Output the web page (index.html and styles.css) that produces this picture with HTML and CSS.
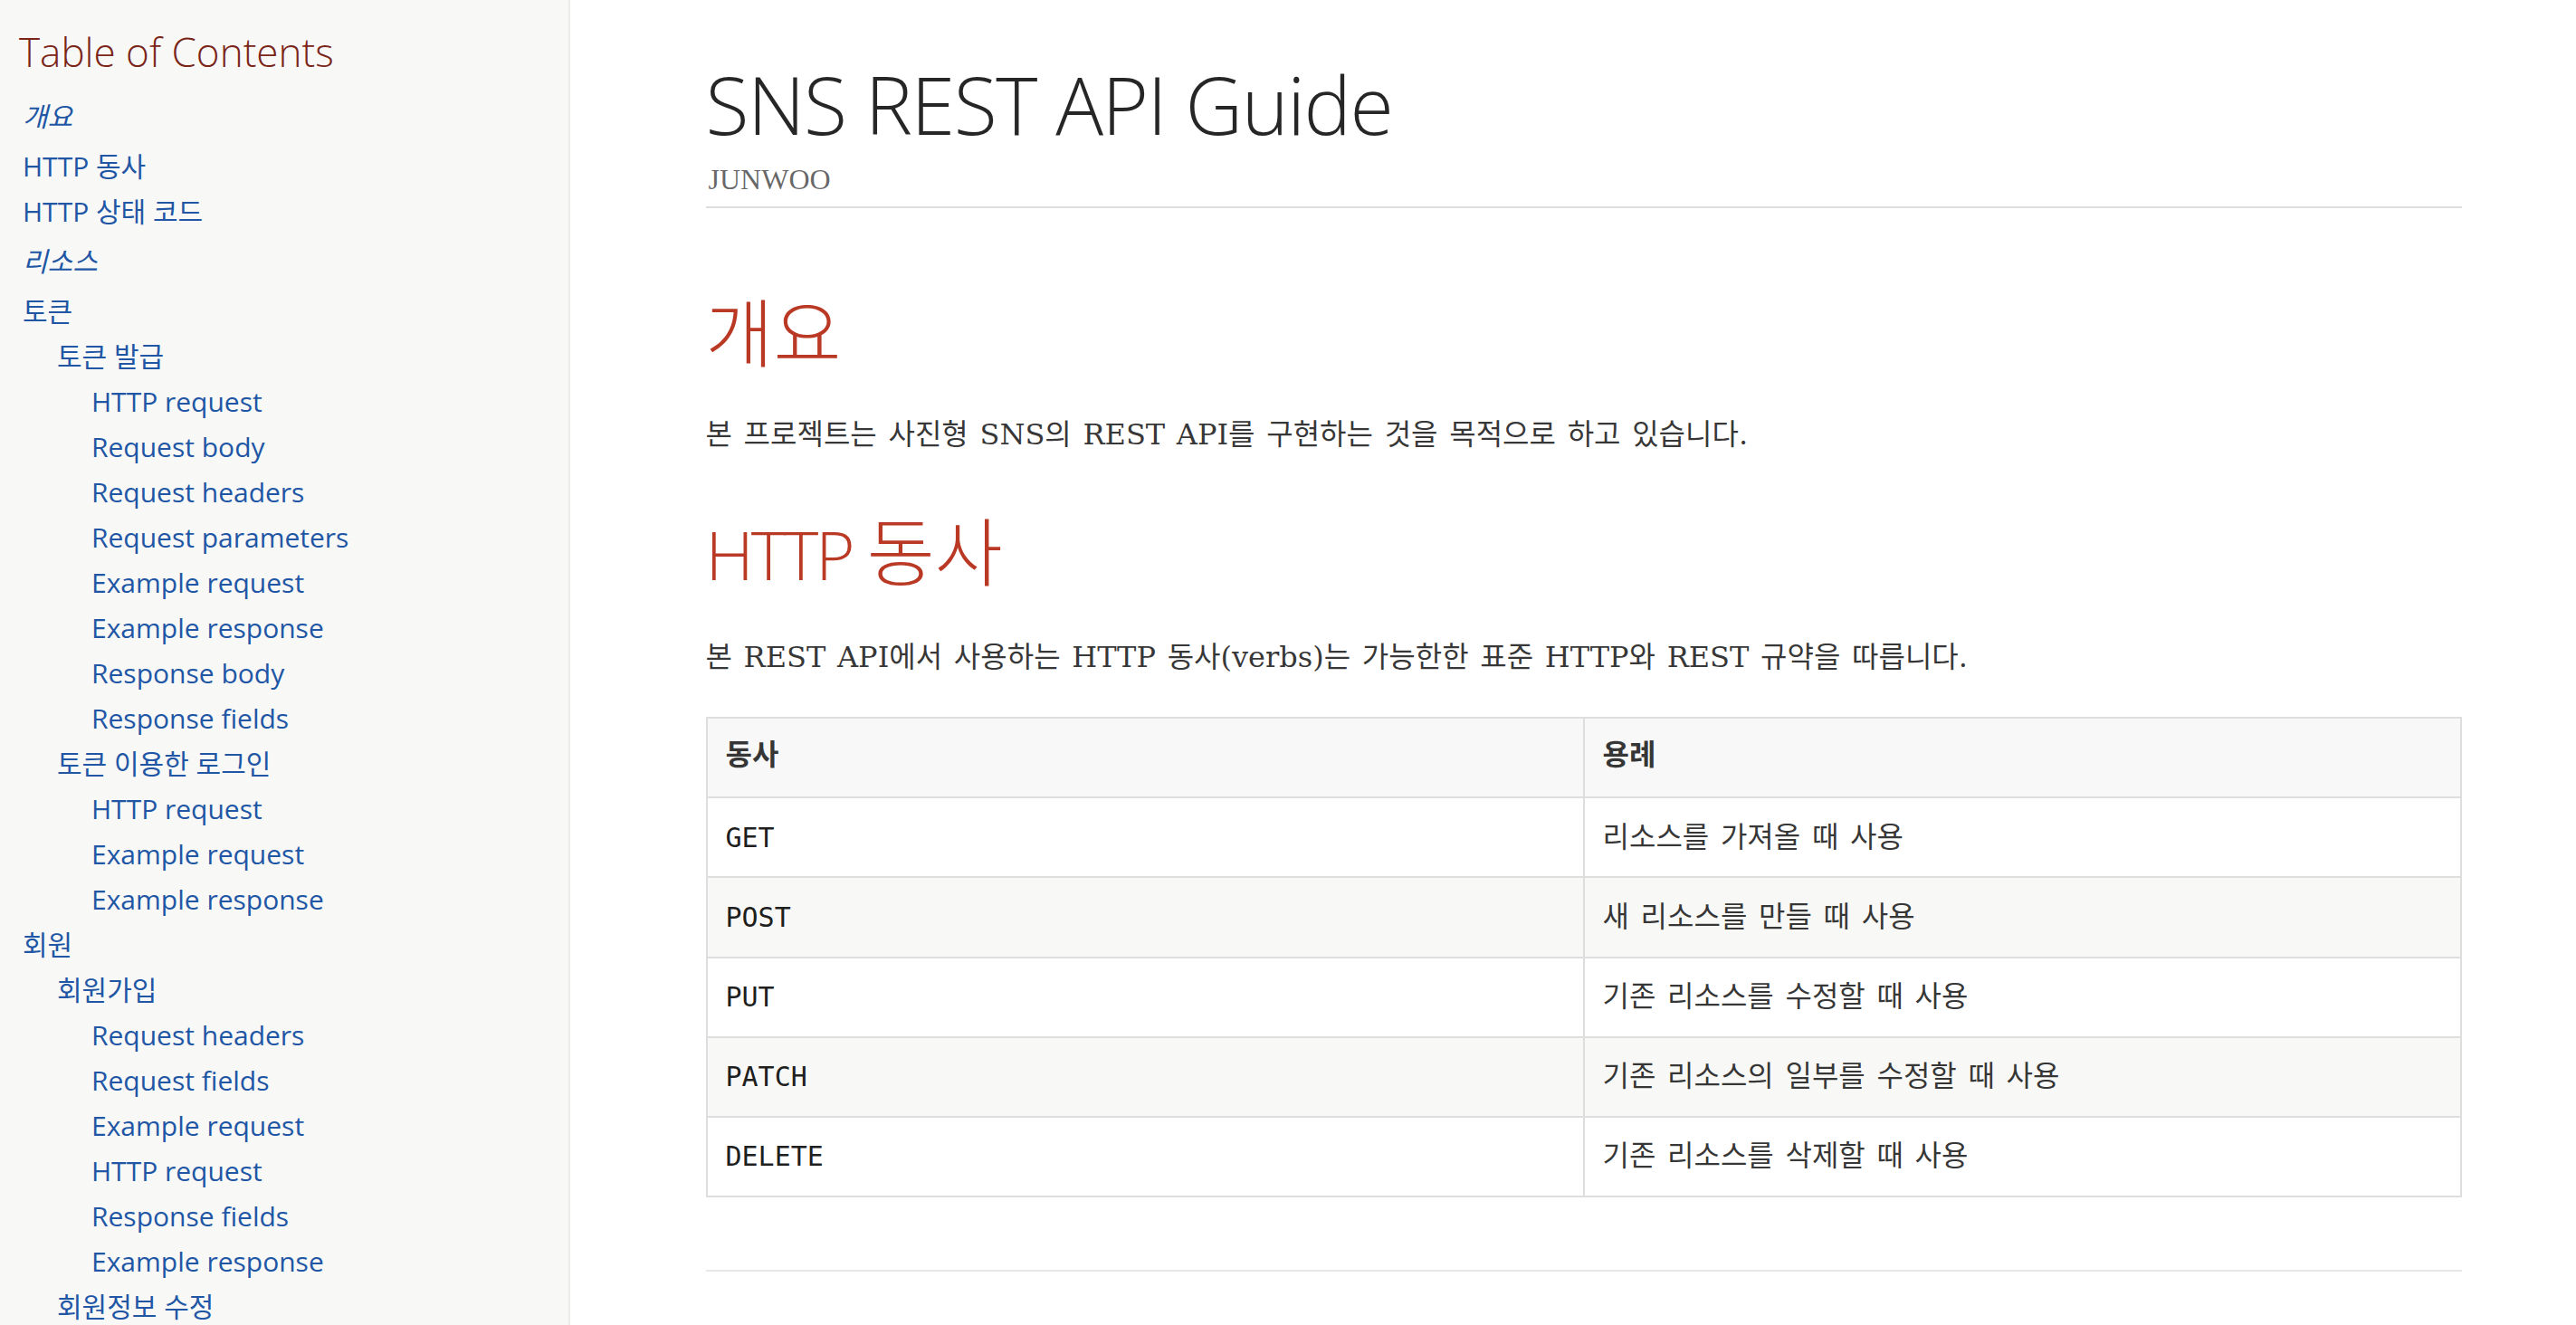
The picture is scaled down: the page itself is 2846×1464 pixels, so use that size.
FILE: index.html
```html
<!DOCTYPE html>
<html lang="ko">
<head>
<meta charset="utf-8">
<title>SNS REST API Guide</title>
<link rel="stylesheet" href="styles.css">
</head>
<body>
<div class="page">
  <nav class="toc">
    <div class="toc-title">Table of Contents</div>
    <ul class="lvl0">
      <li><a class="part" href="#overview">개요</a>
        <ul class="lvl1">
          <li><a href="#verbs">HTTP 동사</a></li>
          <li><a href="#status">HTTP 상태 코드</a></li>
        </ul>
      </li>
      <li><a class="part" href="#resources">리소스</a>
        <ul class="lvl1">
          <li><a href="#token">토큰</a>
            <ul class="sub">
              <li><a href="#token-issue">토큰 발급</a>
                <ul class="sub">
                  <li><a href="#t1">HTTP request</a></li>
                  <li><a href="#t2">Request body</a></li>
                  <li><a href="#t3">Request headers</a></li>
                  <li><a href="#t4">Request parameters</a></li>
                  <li><a href="#t5">Example request</a></li>
                  <li><a href="#t6">Example response</a></li>
                  <li><a href="#t7">Response body</a></li>
                  <li><a href="#t8">Response fields</a></li>
                </ul>
              </li>
              <li><a href="#token-login">토큰 이용한 로그인</a>
                <ul class="sub">
                  <li><a href="#l1">HTTP request</a></li>
                  <li><a href="#l2">Example request</a></li>
                  <li><a href="#l3">Example response</a></li>
                </ul>
              </li>
            </ul>
          </li>
          <li><a href="#member">회원</a>
            <ul class="sub">
              <li><a href="#signup">회원가입</a>
                <ul class="sub">
                  <li><a href="#s1">Request headers</a></li>
                  <li><a href="#s2">Request fields</a></li>
                  <li><a href="#s3">Example request</a></li>
                  <li><a href="#s4">HTTP request</a></li>
                  <li><a href="#s5">Response fields</a></li>
                  <li><a href="#s6">Example response</a></li>
                </ul>
              </li>
              <li><a href="#member-edit">회원정보 수정</a>
                <ul class="sub">
                  <li><a href="#e1">Request headers</a></li>
                  <li><a href="#e2">Request fields</a></li>
                </ul>
              </li>
            </ul>
          </li>
        </ul>
      </li>
    </ul>
  </nav>
  <main class="main">
    <div class="doc">
      <header class="doc-header">
        <h1 class="doc-title">SNS REST API Guide</h1>
        <div class="details"><span class="author">JUNWOO</span></div>
      </header>
      <div class="content">
        <section class="sect">
          <h2 class="sect-title first" id="overview"><span class="ko">개요</span></h2>
          <p>본 프로젝트는 사진형 SNS의 REST API를 구현하는 것을 목적으로 하고 있습니다.</p>
          <h2 class="sect-title second" id="verbs">HTTP <span class="ko">동사</span></h2>
          <p>본 REST API에서 사용하는 HTTP 동사(verbs)는 가능한한 표준 HTTP와 REST 규약을 따릅니다.</p>
          <table class="verbs">
            <colgroup><col class="half"><col class="half"></colgroup>
            <thead>
              <tr><th>동사</th><th>용례</th></tr>
            </thead>
            <tbody>
              <tr><td><code>GET</code></td><td>리소스를 가져올 때 사용</td></tr>
              <tr><td><code>POST</code></td><td>새 리소스를 만들 때 사용</td></tr>
              <tr><td><code>PUT</code></td><td>기존 리소스를 수정할 때 사용</td></tr>
              <tr><td><code>PATCH</code></td><td>기존 리소스의 일부를 수정할 때 사용</td></tr>
              <tr><td><code>DELETE</code></td><td>기존 리소스를 삭제할 때 사용</td></tr>
            </tbody>
          </table>
        </section>
        <hr class="sect-rule">
      </div>
    </div>
  </main>
</div>
</body>
</html>
```

FILE: styles.css
```css
*, *::before, *::after { box-sizing: border-box; }

html, body {
  margin: 0;
  padding: 0;
}

body {
  background: #fff;
  color: rgba(0, 0, 0, 0.8);
  font-family: "DejaVu Serif", "Noto Sans CJK KR", serif;
  -webkit-font-smoothing: antialiased;
}

.page {
  display: flex;
  height: 100vh;
  overflow: hidden;
}

/* ---------- Table of contents ---------- */
.toc {
  flex: none;
  width: 630px;
  height: 100%;
  overflow: hidden;
  background: #f8f8f7;
  border-right: 2px solid #ececeb;
  padding: 31px 20px 0 21px;
}

.toc-title {
  font-family: "Open Sans", "Noto Sans CJK KR", sans-serif;
  font-weight: 300;
  font-size: 44px;
  line-height: 1.2;
  color: #7a2518;
  margin: 0 0 25.6px;
}

.toc ul {
  list-style: none;
  margin: 0;
  padding: 0;
  font-family: "Open Sans", "Noto Sans CJK KR", sans-serif;
}

.toc > ul {
  font-size: 30px;
  margin-left: 4px;
}

.toc li {
  line-height: 1.3334;
  margin-top: 10px;
}

.toc ul.lvl1 {
  margin: 15px 0;
  padding-left: 0;
}

.toc ul.sub {
  padding-left: 38px;
}

.toc a {
  color: #2156a5;
  text-decoration: none;
}

.toc a.part {
  font-style: italic;
}

/* ---------- Main column ---------- */
.main {
  flex: 1;
  min-width: 0;
  padding-left: 23px;
}

.doc {
  max-width: 2000px;
  margin: 0 auto;
  padding: 0 30px;
}

.doc-title {
  font-family: "Open Sans", "Noto Sans CJK KR", sans-serif;
  font-weight: 300;
  font-size: 88px;
  letter-spacing: -1.5px;
  line-height: 1.2;
  color: rgba(0, 0, 0, 0.85);
  margin: 63px 0 0;
}

.details {
  font-family: "Liberation Serif", "Noto Sans CJK KR", serif;
  font-size: 32px;
  line-height: 1.45;
  color: rgba(0, 0, 0, 0.6);
  padding: 6px 0 7px 3px;
  border-bottom: 2px solid #dddddf;
}

.sect {
  padding-bottom: 40px;
}

.sect-title {
  font-family: "Open Sans", "Noto Sans CJK KR", sans-serif;
  font-weight: 300;
  font-size: 74px;
  letter-spacing: -3px;
  line-height: 1.2;
  color: #ba3925;
  margin: 0 0 39px;
}

.sect-title .ko {
  font-size: 1.1em;
  line-height: 1;
  letter-spacing: 0;
}

.sect-title.first {
  margin-top: 97px;
}

.sect-title.second {
  margin-top: 63px;
  margin-bottom: 43px;
}

.sect p {
  font-size: 32px;
  line-height: 1.6;
  word-spacing: 2.5px;
  margin: 0 0 40px;
}

/* ---------- Table ---------- */
.verbs {
  width: 100%;
  border-collapse: collapse;
  border: 2px solid #dedede;
  background: #fff;
  margin: 0 0 40px;
  font-size: 32px;
}

.verbs col.half {
  width: 50%;
}

.verbs th,
.verbs td {
  border: 2px solid #dedede;
  text-align: left;
  line-height: 1.6;
  color: rgba(0, 0, 0, 0.8);
}

.verbs th {
  font-weight: bold;
  padding: 15.5px 20px 19.5px;
  background: #f7f8f7;
}

.verbs td {
  font-weight: normal;
  padding: 17.5px 20px;
  word-spacing: 2.5px;
}

.verbs tbody tr:nth-child(even) td {
  background: #f8f8f7;
}

.verbs code {
  font-family: "DejaVu Sans Mono", monospace;
  font-size: 30px;
  color: rgba(0, 0, 0, 0.9);
}

.sect-rule {
  border: 0;
  border-top: 2px solid #e7e7e9;
  margin: 0;
  height: 0;
}
```
